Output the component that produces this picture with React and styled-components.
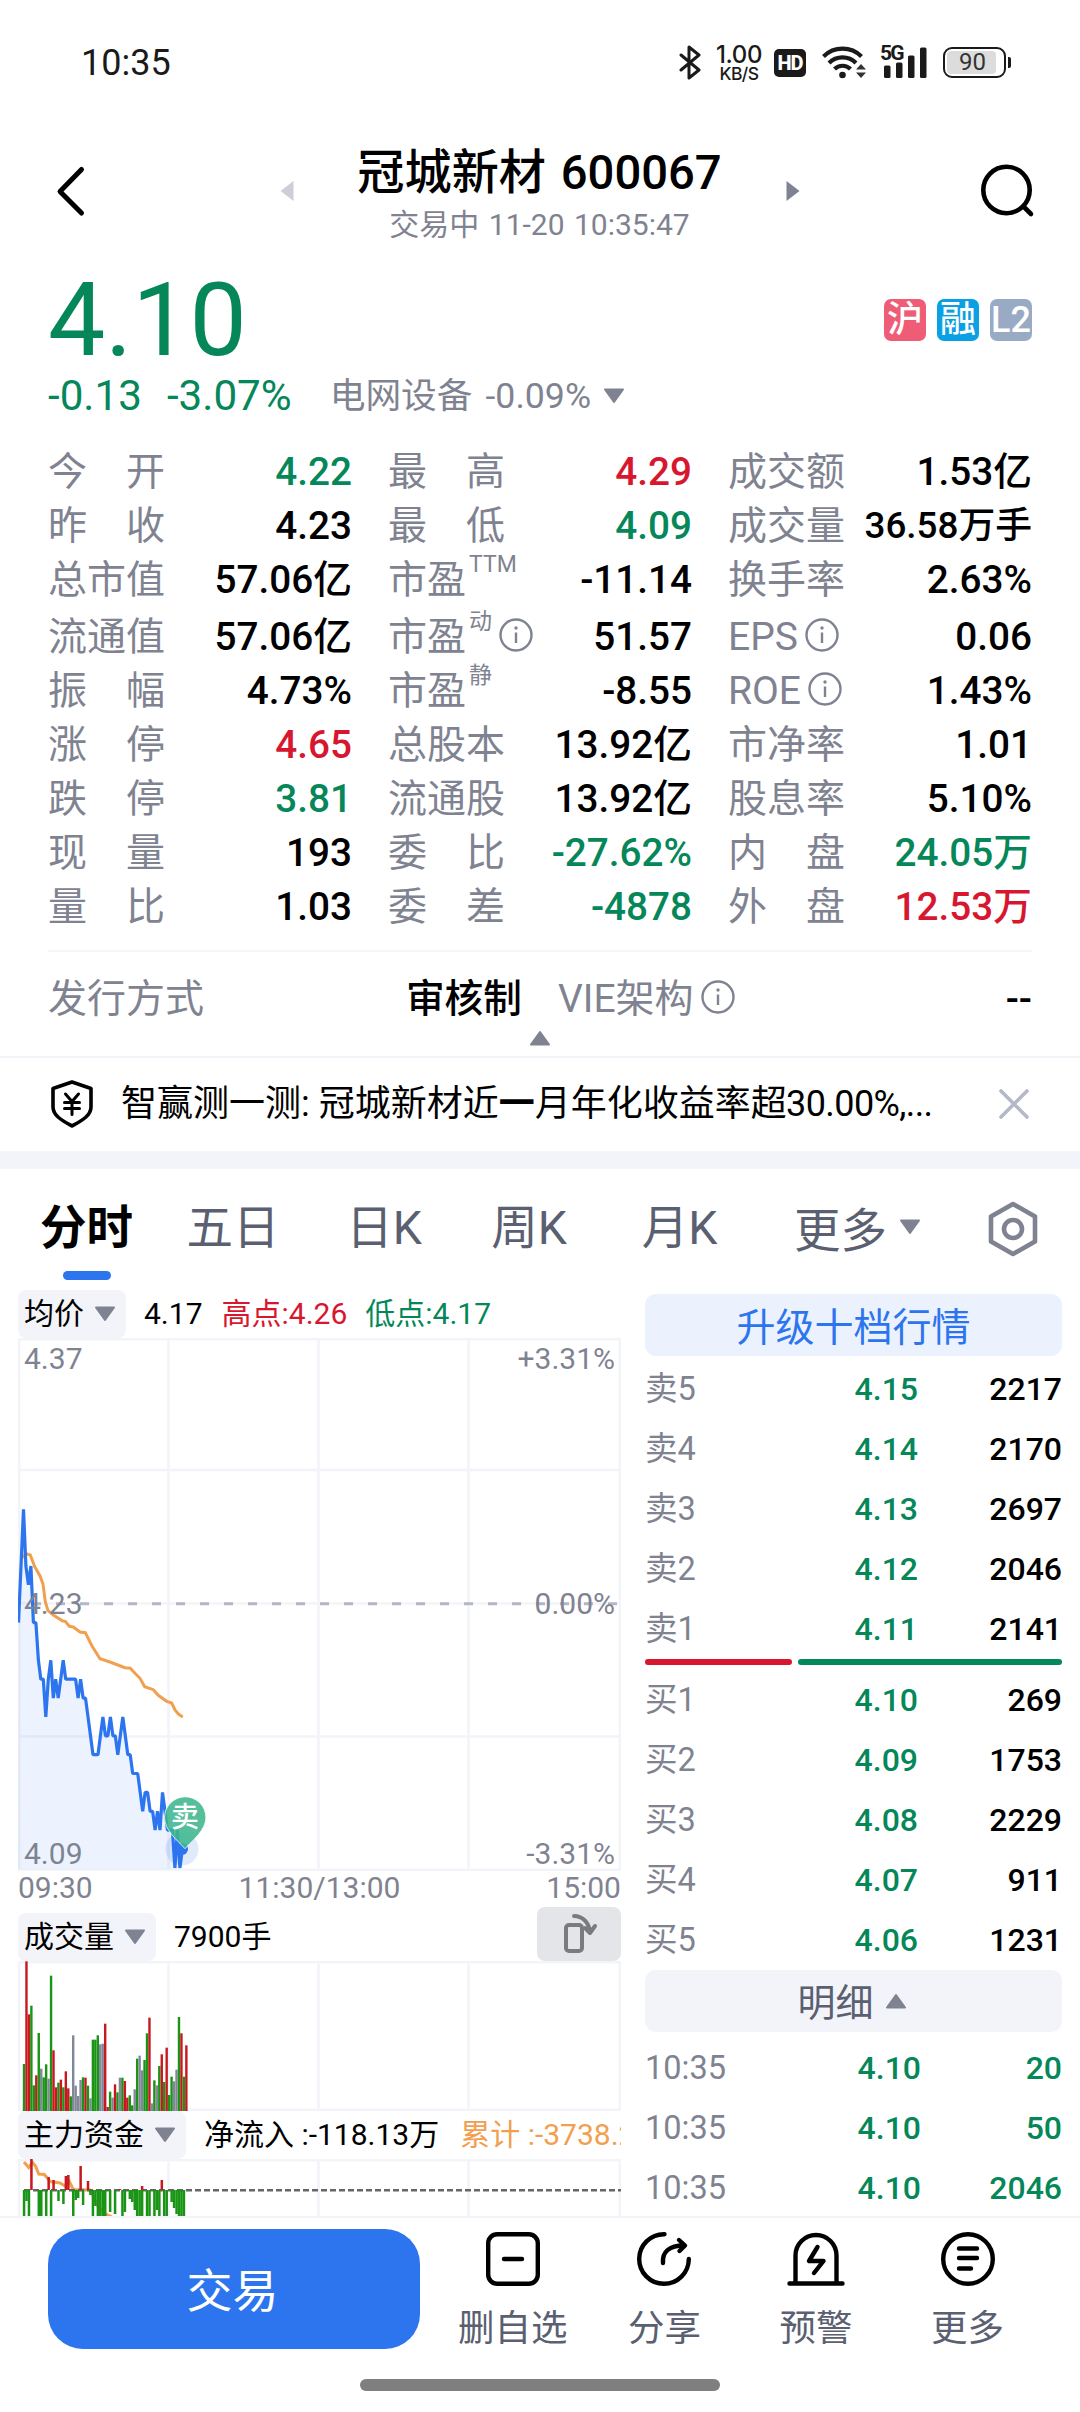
import React from 'react'
import styled, { createGlobalStyle, css } from 'styled-components'

const COLOR = {
  text: '#000000',
  gray: '#7f8391',
  slate: '#5a5f71',
  green: '#05875a',
  red: '#d7172f',
  blue: '#2c75ef',
  orange: '#f0a04f',
  line: '#f3f4f9'
}

const GlobalStyle = createGlobalStyle`
  * {
    box-sizing: border-box;
  }
  body {
    margin: 0;
    background: #fff;
    font-family: Roboto, 'Noto Sans CJK SC', sans-serif;
    color: ${COLOR.text};
  }
`

const Page = styled.div`
  width: 1080px;
  height: 2412px;
  overflow: hidden;
  background: #fff;
  display: flex;
  flex-direction: column;
  white-space: nowrap;
`

/* ---------- status bar ---------- */
const StatusBar = styled.div`
  height: 124px;
  padding: 0 69px 0 81px;
  display: flex;
  align-items: center;
  justify-content: space-between;
  color: #1a1a1a;
`
const Clock = styled.div`
  font-size: 36px;
  line-height: 40px;
  padding-top: 2px;
`
const StatusIcons = styled.div`
  display: flex;
  align-items: center;
`
const NetSpeed = styled.div`
  width: 50px;
  margin: 0 10px 0 13px;
  padding-top: 3px;
  text-align: center;
  font-family: Inter, Roboto, sans-serif;
  font-weight: 500;
  font-size: 24px;
  line-height: 20px;
  letter-spacing: -0.4px;
`
const NetUnit = styled.div`
  font-size: 17.5px;
  line-height: 18px;
  letter-spacing: -0.6px;
`
const HdBadge = styled.div`
  width: 32px;
  height: 28px;
  border-radius: 5px;
  background: #1a1a1a;
  color: #fff;
  font-size: 20px;
  font-weight: 800;
  line-height: 28px;
  text-align: center;
  letter-spacing: -1px;
  margin: 2px 16px 0 0;
`
const Signal = styled.div`
  position: relative;
  width: 46px;
  height: 34px;
  margin: 0 16px 0 14px;
`
const SignalTag = styled.span`
  position: absolute;
  left: -1px;
  top: -2px;
  font-size: 21px;
  line-height: 20px;
  font-weight: 700;
  letter-spacing: -1.8px;
`
const Battery = styled.div`
  width: 63px;
  height: 31px;
  border: 2.5px solid #1a1a1a;
  border-radius: 9px;
  padding: 2px;
`
const BatteryLevel = styled.div`
  width: 49px;
  height: 100%;
  border-radius: 4px;
  background: #dcdcdc;
  font-size: 24px;
  line-height: 23px;
  padding-left: 12px;
  color: #333;
`
const BatteryCap = styled.div`
  width: 3px;
  height: 11px;
  border-radius: 0 2px 2px 0;
  margin-left: 2px;
  background: #1a1a1a;
`

/* ---------- header ---------- */
const Header = styled.div`
  height: 133px;
  padding: 0 44px 0 54px;
  display: flex;
  align-items: center;
  justify-content: space-between;
`
const TitleGroup = styled.div`
  width: 520px;
  display: flex;
  align-items: center;
  justify-content: space-between;
  margin-left: 13px;
`
const TitleText = styled.div`
  text-align: center;
  padding-top: 10px;
`
const Title = styled.div`
  font-size: 47.2px;
  line-height: 58px;
  font-weight: 500;
  word-spacing: 3px;
`
const SubTitle = styled.div`
  font-size: 30px;
  line-height: 46px;
  color: ${COLOR.gray};
  word-spacing: 2px;
`

/* ---------- quote ---------- */
const PriceRow = styled.div`
  height: 121px;
  padding: 4px 48px 0;
  display: flex;
  align-items: center;
  justify-content: space-between;
`
const Price = styled.div`
  font-size: 102px;
  line-height: 96px;
  color: ${COLOR.green};
`
const Badges = styled.div`
  display: flex;
  gap: 11px;
`
const Badge = styled.div`
  width: 42px;
  height: 42px;
  border-radius: 7px;
  background: ${(props) => props.$bg};
  color: #fff;
  font-size: 36px;
  line-height: 42px;
  text-align: center;
  font-weight: 500;
`
const ChangeRow = styled.div`
  height: 67px;
  padding: 0 48px;
  display: flex;
  align-items: center;
  padding-bottom: 31px;
  line-height: 36px;
  color: ${COLOR.green};
  font-size: 42.2px;
`
const ChangePct = styled.span`
  margin-left: 25px;
`
const Sector = styled.span`
  margin: 0 12px 0 38px;
  display: flex;
  gap: 13px;
  font-size: 35.7px;
  color: ${COLOR.gray};
`
const Stats = styled.div`
  padding: 0 48px;
  display: grid;
  grid-template-columns: repeat(3, 304px);
  column-gap: 36px;
`
const StatCell = styled.div`
  height: ${(props) => (props.$tall ? 57 : 54)}px;
  padding-top: ${(props) => (props.$tall ? 3 : 0)}px;
  display: flex;
  justify-content: space-between;
  font-size: 39px;
  line-height: 54px;
`
const StatLabel = styled.div`
  display: flex;
  color: ${COLOR.gray};
`
const StatSup = styled.span`
  margin-left: 3px;
  font-size: 23px;
  line-height: 24px;
`
const StatValue = styled.div`
  font-weight: 500;
  font-size: ${(props) => (props.$long ? 36.8 : 38.7)}px;
  color: ${(props) => COLOR[props.$tone || 'text']};
`
const InfoIcon = styled.svg`
  width: 36px;
  height: 36px;
  margin: 7px 0 0 6px;
`
const IssueRow = styled.div`
  margin: 16px 48px 0;
  padding-top: 20px;
  height: 79px;
  border-top: 2px solid #f6f6f8;
  display: flex;
  font-size: 39px;
  line-height: 54px;
`
const IssueBox = styled.div`
  width: ${(props) => props.$w}px;
  display: flex;
  justify-content: space-between;
  margin-right: ${(props) => props.$mr || 0}px;
`
const Collapse = styled.div`
  height: 27px;
  display: flex;
  justify-content: center;
  padding-top: 1px;
`

/* ---------- notice ---------- */
const Notice = styled.div`
  height: 95px;
  border-top: 2px solid ${COLOR.line};
  padding: 0 50px 2px;
  display: flex;
  align-items: center;
  font-size: 36px;
  line-height: 50px;
`
const NoticeText = styled.div`
  width: 860px;
  margin-left: 27px;
  b {
    font-weight: 700;
  }
`
const NoticeTail = styled.span`
  letter-spacing: -0.6px;
`
const CloseIcon = styled.svg`
  margin-left: auto;
`
const Band = styled.div`
  height: 18px;
  background: ${COLOR.line};
`

/* ---------- period tabs ---------- */
const Tabs = styled.div`
  height: 112px;
  padding-left: 12px;
  display: flex;
`
const Tab = styled.div`
  width: ${(props) => props.$w}px;
  padding-top: 29px;
  display: flex;
  flex-direction: column;
  align-items: center;
  font-size: 46.5px;
  line-height: 60px;
  color: ${COLOR.slate};
  ${(props) =>
    props.$active &&
    css`
      color: #000;
      font-weight: 700;
      &::after {
        content: '';
        width: 48px;
        height: 9px;
        border-radius: 5px;
        background: ${COLOR.blue};
        margin-top: 13px;
      }
    `};
`
const MoreTab = styled.div`
  margin: 0 66px 0 30px;
  height: 115px;
  display: flex;
  align-items: center;
  gap: 12px;
  font-size: 46.5px;
  color: ${COLOR.slate};
`
const SettingIcon = styled.svg`
  margin: 31px 0 0 -1px;
`

/* ---------- main body ---------- */
const Body = styled.div`
  height: 935px;
  display: flex;
  overflow: hidden;
`
const Charts = styled.div`
  width: 603px;
  margin-left: 18px;
  padding-top: 8px;
`
const ChartHead = styled.div`
  height: ${(props) => props.$h}px;
  display: flex;
  align-items: flex-end;
  overflow: hidden;
  font-size: 30px;
  line-height: 48px;
`
const Chip = styled.div`
  flex: none;
  height: 48px;
  padding: 0 10px 0 6px;
  border-radius: 8px;
  background: ${COLOR.line};
  display: flex;
  align-items: center;
  gap: 10px;
`
const HeadText = styled.span`
  margin-left: ${(props) => props.$ml}px;
  color: ${(props) => COLOR[props.$tone || 'text']};
`
// takes the space that is left and cuts the value at the chart edge
const ClippedText = styled(HeadText)`
  flex: 1;
  min-width: 0;
  overflow: hidden;
`
const RotateButton = styled.div`
  width: 84px;
  height: 54px;
  margin-left: auto;
  border-radius: 8px;
  background: #e4e5e9;
  display: flex;
  align-items: center;
  justify-content: center;
`
const ChartBox = styled.div`
  position: relative;
  height: ${(props) => props.$h}px;
  svg {
    display: block;
  }
`
const AxisLabel = styled.span`
  position: absolute;
  top: ${(props) => props.$top}px;
  ${(props) => (props.$right ? 'right: 6px;' : 'left: 6px;')}
  font-size: 30px;
  line-height: 34px;
  color: ${COLOR.gray};
`
const PinText = styled.span`
  position: absolute;
  left: 151px;
  top: 463px;
  width: 32px;
  font-size: 28px;
  line-height: 34px;
  font-weight: 500;
  text-align: center;
  color: #fff;
`
const TimeAxis = styled.div`
  height: 36px;
  display: flex;
  justify-content: space-between;
  font-size: 30px;
  line-height: 34px;
  color: ${COLOR.gray};
`

/* ---------- order book ---------- */
const Book = styled.div`
  width: 417px;
  margin-left: 24px;
  padding-top: 13px;
`
const BookButton = styled.div`
  height: 62px;
  border-radius: 11px;
  background: ${(props) => (props.$primary ? '#ebf2fd' : COLOR.line)};
  color: ${(props) => (props.$primary ? COLOR.blue : COLOR.slate)};
  font-size: ${(props) => (props.$primary ? 39 : 38)}px;
  line-height: 56px;
  padding: ${(props) => (props.$primary ? '6px 0 0' : '4px 3px 0 0')};
  display: flex;
  justify-content: center;
  align-items: center;
  gap: 11px;
  svg {
    margin-bottom: 4px;
  }
`
const BookRows = styled.div`
  padding: ${(props) => props.$pad};
`
const BookRow = styled.div`
  height: 60px;
  display: grid;
  grid-template-columns: 110px ${(props) => (props.$tick ? 166 : 163)}px 1fr;
  font-size: 32px;
  line-height: 60px;
  font-weight: 500;
  text-align: right;
`
const BookName = styled.span`
  color: ${COLOR.gray};
  font-size: 32.5px;
  font-weight: 400;
  text-align: left;
`
const BookPrice = styled.span`
  color: ${COLOR.green};
`
const BookVolume = styled.span`
  color: ${(props) => (props.$green ? COLOR.green : COLOR.text)};
`
const Ratio = styled.div`
  display: flex;
  gap: 6px;
`
const RatioPart = styled.div`
  height: 6px;
  border-radius: 3px;
  flex: ${(props) => props.$flex};
  background: ${(props) => COLOR[props.$tone]};
`

/* ---------- bottom bar ---------- */
const BottomBar = styled.div`
  height: 160px;
  border-top: 2px solid ${COLOR.line};
  padding: 11px 36px 0 48px;
  display: flex;
`
const TradeButton = styled.div`
  width: 372px;
  height: 120px;
  margin-right: 17px;
  padding-right: 3px;
  border-radius: 35px;
  background: ${COLOR.blue};
  color: #fff;
  font-size: 46px;
  line-height: 124px;
  text-align: center;
`
const Action = styled.div`
  width: 151.6px;
  padding-top: 1px;
  display: flex;
  flex-direction: column;
  align-items: center;
  font-size: 36.5px;
  line-height: 50px;
  color: ${COLOR.slate};
  svg {
    margin-bottom: 16px;
  }
`
const HomeIndicator = styled.div`
  width: 360px;
  height: 12px;
  border-radius: 6px;
  margin: 3px auto 0;
  background: #7f7f7f;
`

const Triangle = ({ up }) => (
  <svg width='22' height='16' viewBox='0 0 22 16'>
    <path
      d={up ? 'M2 14.5 L20 14.5 L11 2 Z' : 'M2 1.5 L20 1.5 L11 14 Z'}
      fill={COLOR.gray}
      stroke={COLOR.gray}
      strokeWidth='2'
      strokeLinejoin='round'
    />
  </svg>
)

const Info = () => (
  <InfoIcon viewBox='0 0 36 36' fill='none' stroke={COLOR.gray}>
    <circle cx='18' cy='18' r='15.5' strokeWidth='2.4' />
    <path d='M18 15.5V26' strokeWidth='2.4' />
    <circle cx='18' cy='11' r='1.7' fill={COLOR.gray} stroke='none' />
  </InfoIcon>
)

const stats = [
  ['今　开', '4.22', 'green'],
  ['最　高', '4.29', 'red'],
  ['成交额', '1.53亿'],
  ['昨　收', '4.23'],
  ['最　低', '4.09', 'green'],
  ['成交量', '36.58万手'],
  ['总市值', '57.06亿'],
  ['市盈', '-11.14', 'text', 'TTM'],
  ['换手率', '2.63%'],
  ['流通值', '57.06亿'],
  ['市盈', '51.57', 'text', '动', true],
  ['EPS', '0.06', 'text', '', true],
  ['振　幅', '4.73%'],
  ['市盈', '-8.55', 'text', '静'],
  ['ROE', '1.43%', 'text', '', true],
  ['涨　停', '4.65', 'red'],
  ['总股本', '13.92亿'],
  ['市净率', '1.01'],
  ['跌　停', '3.81', 'green'],
  ['流通股', '13.92亿'],
  ['股息率', '5.10%'],
  ['现　量', '193'],
  ['委　比', '-27.62%', 'green'],
  ['内　盘', '24.05万', 'green'],
  ['量　比', '1.03'],
  ['委　差', '-4878', 'green'],
  ['外　盘', '12.53万', 'red']
]

const tabs = [
  ['分时', 149],
  ['五日', 144],
  ['日K', 158],
  ['周K', 132],
  ['月K', 169]
]

const sells = [
  ['卖5', '4.15', '2217'],
  ['卖4', '4.14', '2170'],
  ['卖3', '4.13', '2697'],
  ['卖2', '4.12', '2046'],
  ['卖1', '4.11', '2141']
]
const buys = [
  ['买1', '4.10', '269'],
  ['买2', '4.09', '1753'],
  ['买3', '4.08', '2229'],
  ['买4', '4.07', '911'],
  ['买5', '4.06', '1231']
]
const ticks = [
  ['10:35', '4.10', '20'],
  ['10:35', '4.10', '50'],
  ['10:35', '4.10', '2046']
]

// one price per minute, in cents
const prices = [
  422, 425, 428, 425, 424, 425, 422, 422, 420, 419, 419, 417, 419, 420, 418,
  419, 418, 419, 420, 419, 419, 419, 419, 419, 418, 419, 418, 418, 417, 416,
  415, 415, 415, 416, 417, 416, 416, 417, 416, 416, 415, 416, 417, 416, 415,
  415, 414, 414, 414, 413, 412, 413, 413, 412, 412, 411, 412, 411, 413, 412,
  411, 411, 411, 409, 411, 409, 410
]
const linePoints = prices
  .map((p, i) => `${(i * 2.483 + 0.5).toFixed(1)},${(265.7 - (p - 423) * 18.87).toFixed(1)}`)
  .join(' ')

const average = [
  [5, 219], [8, 215.7], [12.3, 217], [16.7, 228.7], [22, 238], [25, 246],
  [27.3, 263.7], [30, 272.7], [35.3, 277], [44.7, 283], [47.3, 283.3],
  [51.3, 288.3], [55.3, 289], [62, 294], [67.3, 294.7], [74, 308], [82, 320.7],
  [92, 324], [107, 329.7], [112.3, 330.3], [117, 335.3], [122, 340.3],
  [126.7, 348.7], [135.3, 351.7], [140.3, 357.3], [148.7, 363.3],
  [153.7, 365], [157, 372], [160.7, 376.3], [163.7, 378.3]
]

// height and color of each volume bar
const volumes =
  '141g 449r 290r 316g 77g 107r 234g 127n 101g 140g 97n 406g 182r 71r 85g 94r 71g 119r 68r 44g 227n 76n 45n 93n 101g 100r 76g 38n 214g 214g 227g 200n 202n 262r 12r 58g 40n 80r 56g 100n 100g 90r 40r 47g 17g 65n 157g 166n 122n 153g 233g 280r 23n 92g 77n 135g 170r 87g 190r 48g 103g 89n 124n 282g 233r 103g 197r'.split(
    ' '
  )
const barColors = { r: '#c8171f', g: '#199414', n: '#83879a' }

// main fund flow, minute index and signed height
const flows = [
  [0, -26], [1, -11], [2, -26], [3, 31], [6, -26], [7, -26], [9, -26],
  [10, 13], [11, -26], [12, 10], [14, -11], [16, -14], [17, 14], [18, 15],
  [20, -26], [21, -10], [22, -8], [23, 24], [24, -15], [26, 9], [27, -5],
  [28, -26], [29, -16], [30, -26], [31, -26], [32, -26], [33, -26], [35, -22],
  [37, -24], [39, 1], [40, -26], [41, -22], [43, -9], [44, -12], [45, -20],
  [46, -26], [47, -26], [48, 4], [48, -26], [50, -26], [51, -26], [53, -26],
  [54, -20], [55, -26], [56, 10], [57, -26], [58, -26], [60, -12], [61, -18],
  [62, -24], [63, -26], [64, -26], [65, -26]
]

const Grid = ({ h, rows = [] }) => (
  <g stroke={COLOR.line} strokeWidth='2.5' fill='none'>
    <rect x='1.2' y='1.2' width='600.6' height={h - 2.4} />
    <path d={`M150.5 0V${h}M300.5 0V${h}M450.5 0V${h}`} />
    {rows.map((y) => (
      <path key={y} d={`M0 ${y}H603`} />
    ))}
  </g>
)

const PriceChart = () => (
  <ChartBox $h={533}>
    <svg width='603' height='533' viewBox='0 0 603 533'>
      <Grid h={533} rows={[132, 265.5, 398.5]} />
      <polygon
        points={`0,531 ${linePoints} 163.9,531`}
        fill={COLOR.blue}
        fillOpacity='0.09'
      />
      <path
        d='M14 265.7H603'
        stroke='#b3b7c7'
        strokeWidth='3'
        strokeDasharray='9 15'
      />
      <polyline
        points={average.map((p) => p.join(',')).join(' ')}
        fill='none'
        stroke={COLOR.orange}
        strokeWidth='3'
        strokeLinecap='round'
      />
      <polyline
        points={linePoints}
        fill='none'
        stroke={COLOR.blue}
        strokeWidth='3.2'
        strokeLinejoin='bevel'
      />
      <circle cx='164' cy='511' r='16.5' fill={COLOR.blue} fillOpacity='0.15' />
      <circle cx='164' cy='511' r='6' fill={COLOR.blue} />
      <path
        d='M167 510.7 C159 502 146.5 492 146.5 479.5 A20.7 20.7 0 0 1 187.9 479.5 C187.9 492 175 502 167 510.7 Z'
        fill='#3eb68e'
        fillOpacity='0.88'
        stroke='#fff'
        strokeWidth='0.8'
      />
    </svg>
    <AxisLabel $top={4}>4.37</AxisLabel>
    <AxisLabel $top={249}>4.23</AxisLabel>
    <AxisLabel $top={499}>4.09</AxisLabel>
    <AxisLabel $top={4} $right>+3.31%</AxisLabel>
    <AxisLabel $top={249} $right>0.00%</AxisLabel>
    <AxisLabel $top={499} $right>-3.31%</AxisLabel>
    <PinText>卖</PinText>
  </ChartBox>
)

const VolumeChart = () => (
  <ChartBox $h={150}>
    <svg width='603' height='150' viewBox='0 0 603 150'>
      <Grid h={150} />
      {volumes.map((v, i) => {
        const h = parseInt(v, 10) / 3
        return (
          <rect
            key={i}
            x={4.8 + i * 2.46}
            y={150 - h}
            width='2.4'
            height={h}
            fill={barColors[v.slice(-1)]}
          />
        )
      })}
    </svg>
  </ChartBox>
)

const FundChart = () => (
  <ChartBox $h={57}>
    <svg width='603' height='57' viewBox='0 0 603 57'>
      <Grid h={100} />
      <path
        d='M6 3L10.7 8.5L14.5 3.5L17.5 7L20.7 15L26.3 15.5L29.3 19L32 22.5L42 24L47 27L50.5 21L55.3 30.5L72 31L75.3 37L80.3 48L88.7 55.5L94 58'
        fill='none'
        stroke={COLOR.orange}
        strokeWidth='3'
      />
      <path d='M6 31.2H603' stroke='#666' strokeWidth='2.6' strokeDasharray='6 3' />
      {flows.map(([i, v]) => (
        <rect
          key={`${i}${v}`}
          x={4.8 + i * 2.46}
          y={v > 0 ? 31 - v : 31}
          width='2.5'
          height={Math.abs(v)}
          fill={v > 0 ? barColors.r : barColors.g}
        />
      ))}
    </svg>
  </ChartBox>
)

const BookList = ({ data, tick }) =>
  data.map(([name, price, volume], i) => (
    <BookRow key={i} $tick={tick}>
      <BookName>{name}</BookName>
      <BookPrice>{price}</BookPrice>
      <BookVolume $green={tick}>{volume}</BookVolume>
    </BookRow>
  ))

const icon = {
  width: 58,
  height: 58,
  viewBox: '0 0 58 58',
  fill: 'none',
  stroke: '#000',
  strokeWidth: 4.4,
  strokeLinecap: 'round',
  strokeLinejoin: 'round'
}

const App = () => {
  return (
    <Page>
      <GlobalStyle />
      <StatusBar>
        <Clock>10:35</Clock>
        <StatusIcons>
          <svg width='22' height='35' viewBox='0 0 22 35' fill='none' stroke='#1a1a1a' strokeWidth='3' strokeLinejoin='round' strokeLinecap='round'>
            <path d='M2 10L20 25L10 33V2L20 10L2 25' />
          </svg>
          <NetSpeed>
            1.00
            <NetUnit>KB/S</NetUnit>
          </NetSpeed>
          <HdBadge>HD</HdBadge>
          <svg width='45' height='36' viewBox='0 0 45 36' fill='none' stroke='#1a1a1a' strokeWidth='4.2'>
            <path d='M1.5 12.5A27 27 0 0 1 39.5 12.5' />
            <path d='M7 19A19 19 0 0 1 34 19' />
            <path d='M12.5 25A11.5 11.5 0 0 1 28.5 25' />
            <circle cx='20.5' cy='31' r='3.3' fill='#1a1a1a' stroke='none' />
            <path d='M34 25.5H44L39 20ZM34 28.5H44L39 34Z' fill='#333' stroke='none' />
          </svg>
          <Signal>
            <SignalTag>5G</SignalTag>
            <svg width='46' height='34' viewBox='0 0 46 34' fill='#1a1a1a'>
              <rect x='3' y='20.5' width='6.5' height='12.5' rx='1.5' />
              <rect x='15' y='17.5' width='6.5' height='15.5' rx='1.5' />
              <rect x='27' y='10.5' width='6.5' height='22.5' rx='1.5' />
              <rect x='39' y='2.5' width='6.5' height='30.5' rx='1.5' />
            </svg>
          </Signal>
          <Battery>
            <BatteryLevel>90</BatteryLevel>
          </Battery>
          <BatteryCap />
        </StatusIcons>
      </StatusBar>

      <Header>
        <svg width='34' height='56' viewBox='0 0 34 56' fill='none' stroke='#000' strokeWidth='5' strokeLinecap='round' strokeLinejoin='round'>
          <path d='M27.5 6.5L6 28.5L27.5 50' />
        </svg>
        <TitleGroup>
          <svg width='14' height='22' viewBox='0 0 14 22'>
            <path d='M13.5 1V21L0.5 11Z' fill='#cdcfd6' />
          </svg>
          <TitleText>
            <Title>冠城新材 600067</Title>
            <SubTitle>交易中 11-20 10:35:47</SubTitle>
          </TitleText>
          <svg width='14' height='22' viewBox='0 0 14 22'>
            <path d='M0.5 1V21L13.5 11Z' fill={COLOR.gray} />
          </svg>
        </TitleGroup>
        <svg width='58' height='58' viewBox='0 0 58 58' fill='none' stroke='#000' strokeWidth='4.6' strokeLinecap='round'>
          <circle cx='28.5' cy='28' r='23.2' />
          <path d='M46 45L53 52' />
        </svg>
      </Header>

      <PriceRow>
        <Price>4.10</Price>
        <Badges>
          <Badge $bg='#ee5c76'>沪</Badge>
          <Badge $bg='#0b9fe4'>融</Badge>
          <Badge $bg='#99aac4'>L2</Badge>
        </Badges>
      </PriceRow>
      <ChangeRow>
        <span>-0.13</span>
        <ChangePct>-3.07%</ChangePct>
        <Sector>
          <span>电网设备</span>
          <span>-0.09%</span>
        </Sector>
        <Triangle />
      </ChangeRow>

      <Stats>
        {stats.map(([label, value, tone, sup, info], i) => (
          <StatCell key={i} $tall={i > 8 && i < 12}>
            <StatLabel>
              {label}
              {sup && <StatSup>{sup}</StatSup>}
              {info && <Info />}
            </StatLabel>
            <StatValue $tone={tone} $long={value.length > 6 && !tone}>
              {value}
            </StatValue>
          </StatCell>
        ))}
      </Stats>
      <IssueRow>
        <IssueBox $w={474} $mr={36}>
          <StatLabel>发行方式</StatLabel>
          <StatValue>审核制</StatValue>
        </IssueBox>
        <IssueBox $w={474}>
          <StatLabel>
            VIE架构
            <Info />
          </StatLabel>
          <StatValue>--</StatValue>
        </IssueBox>
      </IssueRow>
      <Collapse>
        <Triangle up />
      </Collapse>

      <Notice>
        <svg width='44' height='50' viewBox='0 0 44 50' fill='none' stroke='#000' strokeWidth='3.6' strokeLinejoin='round' strokeLinecap='round'>
          <path d='M22 3L41 9.5V28C41 37 31 42 22 47C13 42 3 37 3 28V9.5Z' />
          <path d='M15.5 15L22 22.5L28.5 15M22 22.5V35.5M14.5 23.5H29.5M14.5 29.5H29.5' strokeWidth='3' />
        </svg>
        <NoticeText>
          智赢测一测: 冠城新材近<b>一</b>月年化收益率
          <NoticeTail>超30.00%,...</NoticeTail>
        </NoticeText>
        <CloseIcon width='32' height='32' viewBox='0 0 32 32' stroke='#b4b9c7' strokeWidth='3.6' strokeLinecap='round'>
          <path d='M3 3L29 29M29 3L3 29' />
        </CloseIcon>
      </Notice>
      <Band />

      <Tabs>
        {tabs.map(([name, w], i) => (
          <Tab key={name} $w={w} $active={i === 0}>
            {name}
          </Tab>
        ))}
        <MoreTab>
          更多
          <Triangle />
        </MoreTab>
        <SettingIcon width='54' height='58' viewBox='0 0 54 58' fill='none' stroke={COLOR.gray} strokeWidth='4.6' strokeLinejoin='round'>
          <path d='M27 4L49 16.5V41.5L27 54L5 41.5V16.5Z' />
          <circle cx='27' cy='29' r='9' />
        </SettingIcon>
      </Tabs>

      <Body>
        <Charts>
          <ChartHead $h={49}>
            <Chip>
              均价
              <Triangle />
            </Chip>
            <HeadText $ml={18}>4.17</HeadText>
            <HeadText $ml={19} $tone='red'>高点:4.26</HeadText>
            <HeadText $ml={18} $tone='green'>低点:4.17</HeadText>
          </ChartHead>
          <PriceChart />
          <TimeAxis>
            <span>09:30</span>
            <span>11:30/13:00</span>
            <span>15:00</span>
          </TimeAxis>
          <ChartHead $h={54}>
            <Chip>
              成交量
              <Triangle />
            </Chip>
            <HeadText $ml={18}>7900手</HeadText>
            <RotateButton>
              <svg width='38' height='44' viewBox='0 0 38 44' fill='none' stroke='#7b7b7d' strokeWidth='4' strokeLinejoin='round' strokeLinecap='round'>
                <rect x='6' y='13' width='16' height='26' rx='3' />
                <path d='M14 4C22 4 29 10 30 20M25 16L30 21L35 14' />
              </svg>
            </RotateButton>
          </ChartHead>
          <VolumeChart />
          <ChartHead $h={48}>
            <Chip>
              主力资金
              <Triangle />
            </Chip>
            <HeadText $ml={18}>净流入 :-118.13万</HeadText>
            <ClippedText $ml={21} $tone='orange'>累计 :-3738.25</ClippedText>
          </ChartHead>
          <FundChart />
        </Charts>

        <Book>
          <BookButton $primary>升级十档行情</BookButton>
          <BookRows $pad='3px 0 0'>
            <BookList data={sells} />
          </BookRows>
          <Ratio>
            <RatioPart $flex={147} $tone='red' />
            <RatioPart $flex={264} $tone='green' />
          </Ratio>
          <BookRows $pad='5px 0 0'>
            <BookList data={buys} />
          </BookRows>
          <BookButton>
            明细
            <Triangle up />
          </BookButton>
          <BookRows $pad='6px 0 0'>
            <BookList data={ticks} tick />
          </BookRows>
        </Book>
      </Body>

      <BottomBar>
        <TradeButton>交易</TradeButton>
        <Action>
          <svg {...icon}>
            <rect x='4.2' y='4.2' width='49.6' height='49.6' rx='9' />
            <path d='M20 29H38' />
          </svg>
          删自选
        </Action>
        <Action>
          <svg {...icon}>
            <path d='M29.5 4.2A24.8 24.8 0 1 0 53.8 29' />
            <path d='M28 33C27 22 34 15.5 49 15.5M44 10L50 15.5L44.5 21' />
          </svg>
          分享
        </Action>
        <Action>
          <svg {...icon}>
            <path d='M2.5 53.5H55.5M8.5 53V25.5A20.5 20.5 0 0 1 49.5 25.5V53' />
            <path d='M30.5 17L22 31H36.5L27 43' />
          </svg>
          预警
        </Action>
        <Action>
          <svg {...icon}>
            <circle cx='29' cy='29' r='24.8' />
            <path d='M20 18.5H38M20 28H38M20 38.5H32' />
          </svg>
          更多
        </Action>
      </BottomBar>
      <HomeIndicator />
    </Page>
  )
}

export default App
